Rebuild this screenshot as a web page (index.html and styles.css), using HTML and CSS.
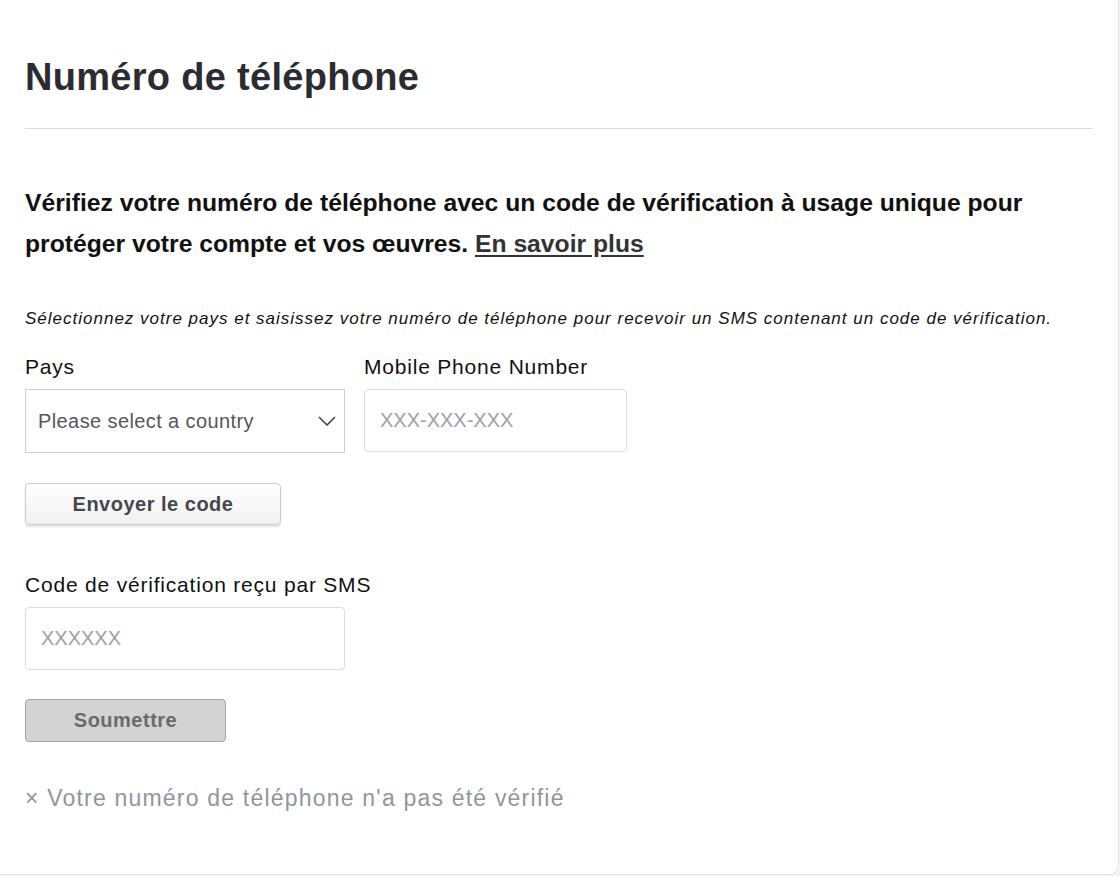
FILE: index.html
```html
<!DOCTYPE html>
<html lang="fr">
<head>
<meta charset="utf-8">
<title>Numéro de téléphone</title>
<link rel="stylesheet" href="styles.css">
</head>
<body>
<div class="card">
  <div class="card-header">
    <h1 class="title">Numéro de téléphone</h1>
  </div>
  <p class="intro">Vérifiez votre numéro de téléphone avec un code de vérification à usage unique pour protéger votre compte et vos œuvres. <a href="#" class="link">En savoir plus</a></p>
  <p class="hint">Sélectionnez votre pays et saisissez votre numéro de téléphone pour recevoir un SMS contenant un code de vérification.</p>
  <div class="row">
    <div class="field">
      <label class="label">Pays</label>
      <div class="select">
        <span class="select-text">Please select a country</span>
        <svg class="chevron" width="18" height="10" viewBox="0 0 18 10"><path d="M1 1 L9 9 L17 1" fill="none" stroke="#444" stroke-width="1.6"/></svg>
      </div>
    </div>
    <div class="field">
      <label class="label">Mobile Phone Number</label>
      <div class="input phone"><span class="placeholder">XXX-XXX-XXX</span></div>
    </div>
  </div>
  <button class="btn btn-send">Envoyer le code</button>
  <label class="label label-code">Code de vérification reçu par SMS</label>
  <div class="input code"><span class="placeholder">XXXXXX</span></div>
  <button class="btn btn-submit">Soumettre</button>
  <p class="status">× Votre numéro de téléphone n'a pas été vérifié</p>
</div>
</body>
</html>
```
FILE: styles.css
```css
html, body {
  margin: 0;
  padding: 0;
  background: #f4f4f5;
  overflow: hidden;
}
body {
  font-family: "Liberation Sans", Arial, sans-serif;
  color: #111;
}
.card {
  box-sizing: border-box;
  width: 1130px;
  height: 886px;
  margin: -11px 0 0 -11px;
  padding: 65px 25px 0 35px;
  background: #fff;
  border: 1px solid #e3e3e5;
  border-radius: 10px;
}
.card-header {
  padding-bottom: 29px;
  border-bottom: 1px solid #d8dbe1;
}
.title {
  margin: 0;
  font-size: 38px;
  line-height: 44px;
  font-weight: 700;
  letter-spacing: 0.3px;
  color: #2b2c31;
}
.intro {
  margin: 53px 0 0;
  font-size: 24.7px;
  line-height: 41px;
  font-weight: 700;
  color: #111;
}
.link {
  color: #333;
  text-decoration: underline;
  text-underline-offset: 3px;
}
.hint {
  margin: 43px 0 0;
  font-size: 17px;
  line-height: 24px;
  font-style: italic;
  letter-spacing: 1px;
  color: #111;
}
.row {
  display: flex;
  gap: 19px;
  margin-top: 24px;
}
.field {
  display: flex;
  flex-direction: column;
}
.label {
  display: block;
  font-size: 21px;
  line-height: 24px;
  letter-spacing: 0.8px;
  color: #111;
}
.select {
  box-sizing: border-box;
  margin-top: 10px;
  width: 320px;
  height: 64px;
  border: 1px solid #cfcfd2;
  display: flex;
  align-items: center;
  justify-content: space-between;
  padding: 0 8px 0 12px;
}
.select-text {
  font-size: 20px;
  letter-spacing: 0.4px;
  color: #54565c;
}
.chevron {
  display: block;
}
.input {
  box-sizing: border-box;
  height: 63px;
  border: 1px solid #dcdde0;
  border-radius: 4px;
  display: flex;
  align-items: center;
  padding-left: 15px;
}
.phone {
  margin-top: 10px;
  width: 263px;
}
.code {
  margin-top: 10px;
  width: 320px;
}
.placeholder {
  font-size: 20px;
  color: #9ca1ab;
}
.btn {
  display: block;
  box-sizing: border-box;
  font-family: "Liberation Sans", Arial, sans-serif;
  font-weight: 700;
  font-size: 20px;
  letter-spacing: 0.5px;
  border-radius: 4px;
  cursor: pointer;
}
.btn-send {
  margin-top: 30px;
  width: 256px;
  height: 42px;
  color: #45474d;
  background: linear-gradient(#ffffff, #f1f1f2);
  border: 1px solid #cdcdd0;
  box-shadow: 0 2px 2px rgba(0, 0, 0, 0.12);
}
.label-code {
  margin-top: 48px;
}
.btn-submit {
  margin-top: 29px;
  width: 201px;
  height: 43px;
  color: #6a6a6a;
  background: #d3d3d3;
  border: 1px solid #a4a4a6;
}
.status {
  margin: 42px 0 0;
  font-size: 23px;
  line-height: 28px;
  letter-spacing: 1.2px;
  color: #8f95a1;
}
```
